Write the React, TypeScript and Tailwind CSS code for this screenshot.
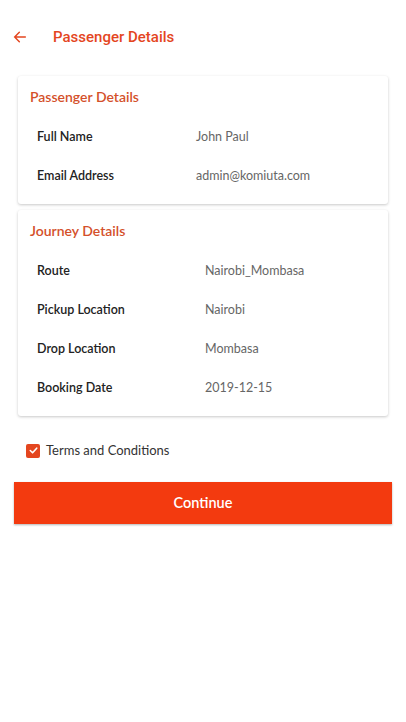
import React, { useState } from "react";

type Row = { label: string; value: string };

const passengerRows: Array<Row> = [
  { label: "Full Name", value: "John Paul" },
  { label: "Email Address", value: "admin@komiuta.com" },
];

const journeyRows: Array<Row> = [
  { label: "Route", value: "Nairobi_Mombasa" },
  { label: "Pickup Location", value: "Nairobi" },
  { label: "Drop Location", value: "Mombasa" },
  { label: "Booking Date", value: "2019-12-15" },
];

const font = { fontFamily: "Lato, 'Open Sans', sans-serif" };

const DetailsCard = ({ title, rows, valueCol }: { title: string; rows: Array<Row>; valueCol: string }) => (
  <div className="mx-[18px] rounded-[3px] bg-white shadow-[0_1px_3px_rgba(0,0,0,0.22)] pb-[8px]" style={font}>
    <div className="h-[42px] flex items-center pl-3 pb-[1px] text-[14px] font-semibold text-[#d4502a]">{title}</div>
    {rows.map((row) => (
      <div key={row.label} className="flex items-center h-[39px]">
        <div className={`${valueCol} pl-[19px] text-[12.5px] font-semibold text-[#222]`}>{row.label}</div>
        <div className="text-[12.5px] text-[#666]">{row.value}</div>
      </div>
    ))}
  </div>
);

const App = () => {
  const [agreed, setAgreed] = useState(true);

  return (
    <div className="w-[406px] h-[722px] bg-white flex flex-col">
      {/* header */}
      <div className="h-[72px] flex items-center pl-[12px] pt-[2px]">
        <svg width="16" height="16" viewBox="0 0 24 24" fill="none" stroke="#e4461f" strokeWidth="2.2" strokeLinecap="round">
          <path d="M20 12H4M11 5l-7 7 7 7" />
        </svg>
        <span className="ml-[25px] text-[15px] font-medium text-[#e4461f]" style={{ fontFamily: "Roboto, sans-serif" }}>
          Passenger Details
        </span>
      </div>

      <div className="flex flex-col gap-[6px] pt-[4px]">
        <DetailsCard title="Passenger Details" rows={passengerRows} valueCol="w-[178px]" />
        <DetailsCard title="Journey Details" rows={journeyRows} valueCol="w-[187px]" />
      </div>

      <label className="flex items-center mt-[25px] ml-[26px] cursor-pointer" style={font}>
        <span
          onClick={() => setAgreed(!agreed)}
          className={`w-[14px] h-[14px] rounded-[2px] flex items-center justify-center ${agreed ? "bg-[#e4461f]" : "border-2 border-gray-500"}`}
        >
          {agreed && (
            <svg width="11" height="11" viewBox="0 0 24 24" fill="none" stroke="white" strokeWidth="3.5" strokeLinecap="round" strokeLinejoin="round">
              <path d="M5 12l5 5 9-10" />
            </svg>
          )}
        </span>
        <span className="ml-[6px] text-[13px] text-[#333]">Terms and Conditions</span>
      </label>

      <button
        className="mt-[21px] mx-[14px] h-[42px] bg-[#f33a0f] text-white text-[14.5px] font-semibold shadow-[0_1px_2px_rgba(0,0,0,0.3)]"
        style={font}
      >
        Continue
      </button>
    </div>
  );
};

export default App;
